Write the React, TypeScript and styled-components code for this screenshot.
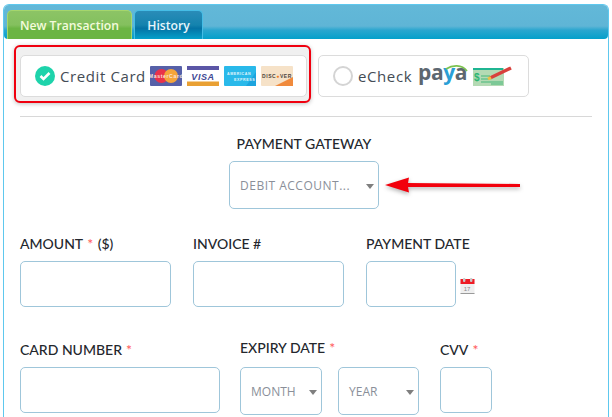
import React from 'react'
import styled, { createGlobalStyle } from 'styled-components'

const GlobalStyle = createGlobalStyle`
  html, body {
    margin: 0;
    padding: 0;
    background: #fff;
    overflow: hidden;
  }
  body {
    font-family: 'Lato', 'Liberation Sans', sans-serif;
  }
`

const Panel = styled.div`
  margin: 4px 3px 0 3px;
  height: 420px;
  box-sizing: border-box;
  border: 1px solid #5ec8ee;
  border-bottom: 0;
  border-radius: 6px 6px 0 0;
`

const Header = styled.div`
  display: flex;
  align-items: flex-end;
  gap: 2px;
  height: 34px;
  padding-left: 3px;
  border-radius: 5px 5px 4px 4px;
  background: linear-gradient(to bottom, #62b8d8 0%, #5fb5d6 62%, #2aa6cf 74%, #04a0ca 100%);
`

const Tab = styled.div<{ $active?: boolean }>`
  box-sizing: border-box;
  height: 29px;
  width: ${p => (p.$active ? 125 : 69)}px;
  display: flex;
  align-items: center;
  justify-content: center;
  border: 1px solid ${p => (p.$active ? '#a5d66c' : '#45bde6')};
  border-bottom: 0;
  border-radius: 5px 5px 0 0;
  font-family: 'Open Sans', sans-serif;
  font-size: 12.2px;
  font-weight: 600;
  white-space: nowrap;
  color: ${p => (p.$active ? '#f4fbdc' : '#e6f5fb')};
  background: ${p =>
    p.$active
      ? 'linear-gradient(to bottom, #8cc465 0%, #84c05e 50%, #6cb544 62%, #6cb544 100%)'
      : 'linear-gradient(to bottom, #2a8cb8 0%, #1483ae 50%, #0473a5 62%, #04a0ca 100%)'};
`

const Body = styled.div`
  padding: 6px 14px 0 10px;
`

const PaymentRow = styled.div`
  display: flex;
  align-items: flex-start;
  gap: 7px;
`

const Highlight = styled.div`
  box-sizing: border-box;
  width: 297px;
  height: 58px;
  padding: 8px 0 6px 4px;
  border: 2px solid #f0000f;
  border-radius: 6px;
  background: #f0f0f0;
  box-shadow: 0 1px 4px rgba(0, 0, 0, 0.25);
`

const MethodCard = styled.div<{ $width: number; $offset?: number }>`
  box-sizing: border-box;
  display: flex;
  align-items: center;
  width: ${p => p.$width}px;
  height: 42px;
  padding-left: 14px;
  margin-top: ${p => p.$offset || 0}px;
  background: #fff;
  border: 1px solid #dcdcdc;
  border-radius: 5px;
  font-family: 'Open Sans', sans-serif;
  font-size: 15px;
  letter-spacing: 0.6px;
  color: #444c55;
`

const CheckDot = styled.span`
  width: 20px;
  height: 20px;
  border-radius: 50%;
  background: #1ed3ab;
  display: flex;
  align-items: center;
  justify-content: center;
  margin-right: 5px;
  flex: none;
`

const RadioDot = styled.span`
  box-sizing: border-box;
  width: 20px;
  height: 20px;
  border-radius: 50%;
  border: 2px solid #d4d4d4;
  margin-right: 5px;
  flex: none;
`

const Logos = styled.div`
  display: flex;
  gap: 5px;
  margin-left: 4px;
`

const CardLogo = styled.svg`
  display: block;
  width: 32px;
  height: 20px;
`

const PayaLogo = styled.svg`
  display: block;
  width: 50px;
  height: 26px;
  margin-left: 6px;
  overflow: visible;
`

const CheckLogo = styled.svg`
  display: block;
  width: 40px;
  height: 20px;
  margin-left: 5px;
`

const Divider = styled.hr`
  height: 1px;
  margin: 13px 2px 0 6px;
  border: 0;
  background: #d8d8d8;
`

const GatewayBlock = styled.div`
  position: relative;
  display: flex;
  flex-direction: column;
  align-items: center;
  width: 568px;
  margin: 18px 0 0 6px;
`

const ArrowMark = styled.svg`
  position: absolute;
  left: 364px;
  top: 41px;
  width: 138px;
  height: 20px;
  filter: drop-shadow(0 2px 2px rgba(0, 0, 0, 0.3));
`

const Label = styled.div<{ $top?: number; $bottom?: number }>`
  height: 17px;
  line-height: 17px;
  margin: ${p => p.$top || 0}px 0 ${p => p.$bottom ?? 9}px 0;
  font-size: 14px;
  font-weight: 500;
  white-space: nowrap;
  color: #24272d;
`

const Required = styled.span`
  color: #ff5a5a;
  margin: 0 1px 0 4px;
`

const SelectBox = styled.div<{ $width: number; $spaced?: boolean }>`
  box-sizing: border-box;
  position: relative;
  display: flex;
  align-items: center;
  width: ${p => p.$width}px;
  height: 48px;
  padding-left: 10px;
  background: #fff;
  border: 1px solid #9fc6da;
  border-radius: 5px;
  font-family: 'Open Sans', sans-serif;
  font-size: 12px;
  letter-spacing: ${p => (p.$spaced ? 0.5 : 0)}px;
  white-space: nowrap;
  color: #8a8f99;
  &::after {
    content: '';
    position: absolute;
    right: 4px;
    top: 22px;
    border-left: 4px solid transparent;
    border-right: 4px solid transparent;
    border-top: 5px solid #7f7f7f;
  }
`

const TextBox = styled.div<{ $width: number }>`
  box-sizing: border-box;
  width: ${p => p.$width}px;
  height: 46px;
  background: #fff;
  border: 1px solid #9fc6da;
  border-radius: 5px;
`

const FieldRow = styled.div<{ $top: number; $gap: number }>`
  display: flex;
  align-items: flex-start;
  gap: ${p => p.$gap}px;
  margin: ${p => p.$top}px 0 0 6px;
`

const Field = styled.div`
  display: flex;
  flex-direction: column;
`

const DateInputs = styled.div`
  display: flex;
  align-items: center;
  gap: 4px;
`

const Selects = styled.div`
  display: flex;
  gap: 16px;
  padding-right: 1px;
`

const CalendarIcon = styled.svg`
  display: block;
  width: 15px;
  height: 16px;
  margin-top: 4px;
`

const logoFont = 'Liberation Sans, sans-serif'

const MasterCard = () => (
  <CardLogo viewBox="0 0 32 20">
    <rect width="32" height="20" rx="1" fill="#5660a8" />
    <circle cx="11.5" cy="10" r="7" fill="#e9324a" />
    <circle cx="21" cy="10" r="7" fill="#f5a53a" />
    <text x="16" y="12" textAnchor="middle" fontSize="5.2" fontWeight="700" fill="#fbe3d8" fontFamily={logoFont}>
      MasterCard
    </text>
  </CardLogo>
)

const Visa = () => (
  <CardLogo viewBox="0 0 32 20">
    <rect width="32" height="20" fill="#fff" />
    <rect width="32" height="4" fill="#5b56a6" />
    <rect y="15.5" width="32" height="4.5" fill="#e9a033" />
    <text x="16" y="14" textAnchor="middle" fontSize="9" fontWeight="700" fontStyle="italic" fill="#3f4a94" fontFamily={logoFont}>
      VISA
    </text>
  </CardLogo>
)

const Amex = () => (
  <CardLogo viewBox="0 0 32 20">
    <rect width="32" height="20" rx="1" fill="#29b9ea" />
    <path d="M22 20 L32 6 V20 Z" fill="#1ca4de" />
    <text x="3" y="9" fontSize="3.6" fontWeight="700" fill="#e4f6fc" fontFamily={logoFont}>
      AMERICAN
    </text>
    <text x="10" y="15" fontSize="3.6" fontWeight="700" fill="#e4f6fc" fontFamily={logoFont}>
      EXPRESS
    </text>
  </CardLogo>
)

const Discover = () => (
  <CardLogo viewBox="0 0 32 20">
    <rect width="32" height="20" rx="1" fill="#f6e2c8" />
    <path d="M14 20 L32 11 V20 Z" fill="#f08a3c" />
    <text x="16" y="12" textAnchor="middle" fontSize="5" fontWeight="700" fill="#4c4741" fontFamily={logoFont}>
      DISC
      <tspan fill="#ee7d24">●</tspan>
      VER
    </text>
  </CardLogo>
)

const Paya = () => (
  <PayaLogo viewBox="0 0 50 26">
    <text x="0" y="17" fontSize="21" fontWeight="700" fill="#5d6770" fontFamily="'Open Sans', sans-serif" letterSpacing="-0.4">
      pa
      <tspan fill="#2a9fd6">y</tspan>a
    </text>
    <path d="M28 6 C34 2 44 1 49 8" fill="none" stroke="#7cc24f" strokeWidth="1.6" />
  </PayaLogo>
)

const CheckArt = () => (
  <CheckLogo viewBox="0 0 40 20">
    <rect x="0" y="2" width="31" height="18" fill="#b4dab4" />
    <rect x="0" y="2" width="30" height="2" fill="#1fb592" />
    <text x="1" y="15" fontSize="10" fontWeight="700" fill="#2bb673" fontFamily={logoFont}>
      $
    </text>
    <path d="M8 10 H17 M8 13 H16 M8 16 H30 M18 18 H30" stroke="#46b87a" strokeWidth="1" />
    <path d="M17 12 L38 2" stroke="#d8403c" strokeWidth="3.4" />
    <path d="M15 13 L18 11.5" stroke="#f0c040" strokeWidth="3" />
  </CheckLogo>
)

const Calendar = () => (
  <CalendarIcon viewBox="0 0 15 16">
    <rect x="0.5" y="1" width="14" height="15" fill="#efefef" />
    <rect x="0.5" y="1" width="14" height="5" fill="#ee1c25" />
    <rect x="3" y="0" width="2.4" height="4" rx="1" fill="#c8c8c8" />
    <rect x="10" y="0" width="2.4" height="4" rx="1" fill="#c8c8c8" />
    <rect x="0.5" y="15" width="14" height="1" fill="#9a9a9a" />
    <text x="7" y="13" textAnchor="middle" fontSize="6" fill="#8a8a8a" fontFamily={logoFont}>
      17
    </text>
  </CalendarIcon>
)

const App: React.FC = () => {
  return (
    <>
      <GlobalStyle />
      <Panel>
        <Header>
          <Tab $active>New Transaction</Tab>
          <Tab>History</Tab>
        </Header>
        <Body>
          <PaymentRow>
            <Highlight>
              <MethodCard $width={287}>
                <CheckDot>
                  <svg width="12" height="10" viewBox="0 0 12 10">
                    <path d="M1.5 5 L4.5 8 L10.5 2" fill="none" stroke="#fff" strokeWidth="2.6" />
                  </svg>
                </CheckDot>
                Credit Card
                <Logos>
                  <MasterCard />
                  <Visa />
                  <Amex />
                  <Discover />
                </Logos>
              </MethodCard>
            </Highlight>
            <MethodCard $width={211} $offset={10}>
              <RadioDot />
              eCheck
              <Paya />
              <CheckArt />
            </MethodCard>
          </PaymentRow>
          <Divider />
          <GatewayBlock>
            <Label>PAYMENT GATEWAY</Label>
            <SelectBox $width={150} $spaced>
              DEBIT ACCOUNT...
            </SelectBox>
            <ArrowMark viewBox="0 0 138 20">
              <path d="M1 9 L25 1.5 L24 7 L136 8 L136 11 L24 11 L25 16.5 Z" fill="#f2000c" />
            </ArrowMark>
          </GatewayBlock>
          <FieldRow $top={26} $gap={22}>
            <Field>
              <Label>
                AMOUNT<Required>*</Required> ($)
              </Label>
              <TextBox $width={151} />
            </Field>
            <Field>
              <Label>INVOICE #</Label>
              <TextBox $width={151} />
            </Field>
            <Field>
              <Label>PAYMENT DATE</Label>
              <DateInputs>
                <TextBox $width={90} />
                <Calendar />
              </DateInputs>
            </Field>
          </FieldRow>
          <FieldRow $top={32} $gap={20}>
            <Field>
              <Label $top={2} $bottom={9}>
                CARD NUMBER<Required>*</Required>
              </Label>
              <TextBox $width={200} />
            </Field>
            <Field>
              <Label $bottom={11}>
                EXPIRY DATE<Required>*</Required>
              </Label>
              <Selects>
                <SelectBox $width={82}>MONTH</SelectBox>
                <SelectBox $width={81}>YEAR</SelectBox>
              </Selects>
            </Field>
            <Field>
              <Label $top={2} $bottom={9}>
                CVV<Required>*</Required>
              </Label>
              <TextBox $width={52} />
            </Field>
          </FieldRow>
        </Body>
      </Panel>
    </>
  )
}

export default App
